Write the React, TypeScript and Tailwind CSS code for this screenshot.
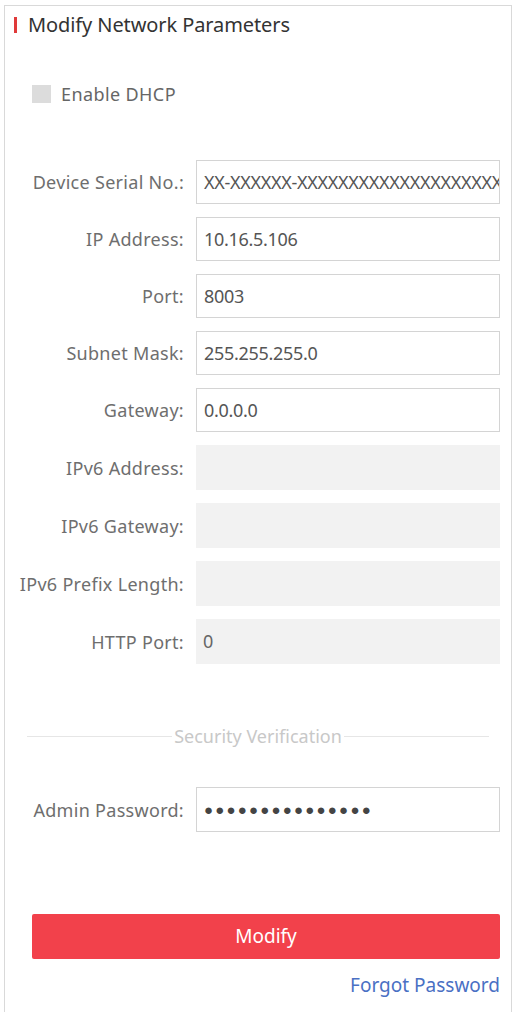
import React from "react";

const font = { fontFamily: '"Noto Sans", "Open Sans", Arial, sans-serif' };

type Row = { label: string; value?: string; disabled?: boolean };

const rows: Row[] = [
  { label: "Device Serial No.:", value: "XX-XXXXXX-XXXXXXXXXXXXXXXXXXXX" },
  { label: "IP Address:", value: "10.16.5.106" },
  { label: "Port:", value: "8003" },
  { label: "Subnet Mask:", value: "255.255.255.0" },
  { label: "Gateway:", value: "0.0.0.0" },
  { label: "IPv6 Address:", disabled: true },
  { label: "IPv6 Gateway:", disabled: true },
  { label: "IPv6 Prefix Length:", disabled: true },
  { label: "HTTP Port:", value: "0", disabled: true },
];

function Field({ label, value, disabled }: Row) {
  return (
    <div className="flex items-center">
      <div className="w-[180px] shrink-0 whitespace-nowrap pr-[12px] text-right text-[18px] leading-[24px] tracking-[0.3px] text-[#6e6e6e]">
        {label}
      </div>
      <div
        className={
          disabled
            ? "flex h-[45px] w-[304px] items-center overflow-hidden bg-[#f2f2f2] px-[7px] text-[18px] text-[#666]"
            : "flex h-[44px] w-[304px] items-center overflow-hidden whitespace-nowrap border border-[#d4d4d4] px-[7px] text-[18px] tracking-[-0.3px] text-[#555]"
        }
      >
        {value}
      </div>
    </div>
  );
}

export default function App() {
  return (
    <div className="min-h-[1012px] bg-white pl-[4px] pr-[6px] pt-[5px]" style={font}>
      <div className="min-h-[1007px] border-x border-t border-[#d9d9d9] bg-white">
        <div className="flex items-center pl-[9px] pt-[7px]">
          <span className="h-[16px] w-[3px] bg-[#e03a3a]" />
          <span className="ml-[11px] text-[20px] leading-[24px] tracking-[-0.1px] text-[#333]">
            Modify Network Parameters
          </span>
        </div>

        <label className="mt-[45px] flex items-center pl-[27px]">
          <span className="h-[18px] w-[19px] bg-[#dcdcdc]" />
          <span className="ml-[10px] text-[18px] leading-[24px] tracking-[0.4px] text-[#666]">
            Enable DHCP
          </span>
        </label>

        <div className="mt-[54px] flex flex-col gap-[13px] pl-[11px]">
          {rows.map((r) => (
            <Field key={r.label} {...r} />
          ))}
        </div>

        <div className="mt-[60px] flex items-center px-[22px]">
          <div className="h-px flex-1 bg-[#e6e6e6]" />
          <span className="px-[2px] text-[18px] leading-[24px] text-[#c8c8c8]">
            Security Verification
          </span>
          <div className="h-px flex-1 bg-[#e6e6e6]" />
        </div>

        <div className="mt-[39px] flex items-center pl-[11px]">
          <div className="w-[180px] shrink-0 whitespace-nowrap pr-[12px] text-right text-[18px] leading-[24px] tracking-[0.3px] text-[#6e6e6e]">
            Admin Password:
          </div>
          <div className="flex h-[45px] w-[304px] items-center border border-[#d4d4d4] px-[7px] text-[15px] tracking-[2.2px] text-[#444]">
            ●●●●●●●●●●●●●●●
          </div>
        </div>

        <div className="mt-[82px] pl-[27px] pr-[11px]">
          <button className="h-[45px] w-full rounded-[2px] bg-[#f2414b] text-[19px] text-white">
            Modify
          </button>
        </div>

        <div className="mt-[14px] flex justify-end pr-[11px]">
          <a className="text-[19px] leading-[24px] text-[#4a70c4]">Forgot Password</a>
        </div>
      </div>
    </div>
  );
}
